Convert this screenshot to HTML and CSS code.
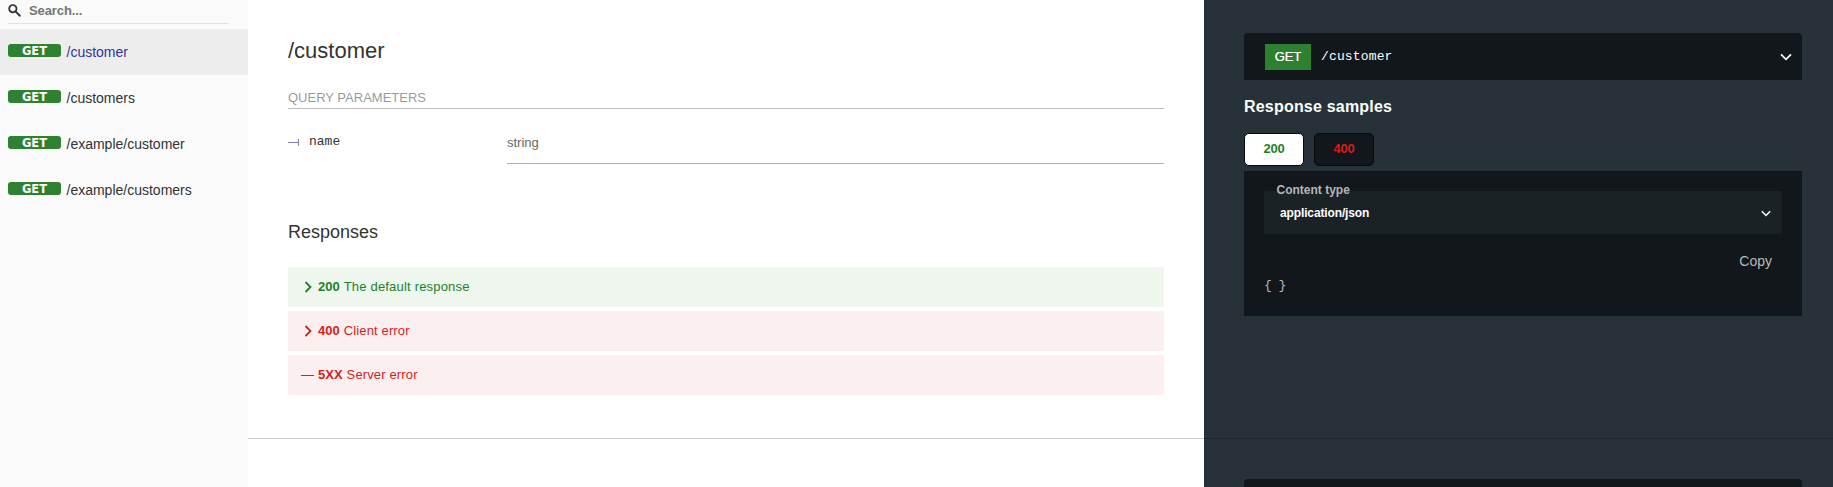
FILE: index.html
```html
<!DOCTYPE html>
<html lang="en">
<head>
<meta charset="utf-8">
<title>API reference</title>
<link rel="stylesheet" href="styles.css">
</head>
<body>
<div class="layout">
  <nav class="sidebar">
    <div class="search">
      <svg class="search-icon" viewBox="0 0 1000 1000"><path d="M968 849 667 549c84-135 68-315-49-432C482-19 262-19 126 117S-10 473 126 609c117 117 297 133 432 49l301 301c24 24 65 21 92-6l12-12c26-27 29-68 5-92zM526 509c-84 84-219 84-302 0s-83-218 0-302 218-84 302 0 83 218 0 302z"/></svg>
      <span class="search-text">Search...</span>
    </div>
    <a class="item active"><span class="badge">GET</span><span>/customer</span></a>
    <a class="item"><span class="badge">GET</span><span>/customers</span></a>
    <a class="item"><span class="badge">GET</span><span>/example/customer</span></a>
    <a class="item"><span class="badge">GET</span><span>/example/customers</span></a>
  </nav>
  <div class="operations">
    <section class="operation">
      <main class="middle">
        <h2 class="title">/customer</h2>
        <h5 class="params-title">QUERY PARAMETERS</h5>
        <div class="param">
          <div class="param-name"><span class="bullet"></span><span>name</span></div>
          <div class="param-type">string</div>
        </div>
        <h3 class="responses-title">Responses</h3>
        <div class="responses">
          <div class="response ok"><svg class="chevron" viewBox="0 0 12 12"><path d="M3.5 1 8.5 6 3.5 11"/></svg><strong>200</strong><span class="first">The default response</span></div>
          <div class="response error"><svg class="chevron" viewBox="0 0 12 12"><path d="M3.5 1 8.5 6 3.5 11"/></svg><strong>400</strong><span>Client error</span></div>
          <div class="response error"><span class="dash">—</span><strong>5XX</strong><span>Server error</span></div>
        </div>
      </main>
      <aside class="samples">
        <div class="endpoint">
          <span class="verb">GET</span><span class="path">/customer</span>
          <svg class="arrow" viewBox="0 0 12 8"><path d="M1 1.3 6 6.3 11 1.3"/></svg>
        </div>
        <h3 class="samples-title">Response samples</h3>
        <div class="tabs"><div class="tab selected">200</div><div class="tab">400</div></div>
        <div class="panel">
          <div class="dropdown">
            <span class="label">Content type</span>
            <span class="value">application/json</span>
            <svg class="arrow small" viewBox="0 0 12 8"><path d="M1 1.3 6 6.3 11 1.3"/></svg>
          </div>
          <div class="copy">Copy</div>
          <div class="json">{ }</div>
        </div>
      </aside>
    </section>
    <section class="operation next">
      <main class="middle"></main>
      <aside class="samples"><div class="endpoint"></div></aside>
    </section>
  </div>
</div>
</body>
</html>
```
FILE: styles.css
```css
* { box-sizing: border-box; }
body {
  margin: 0;
  height: 487px;
  overflow: hidden;
  background: #fff;
  color: #333;
  font-family: "Liberation Sans", Arial, sans-serif;
}
h2, h3, h5 { margin: 0; font-weight: 400; }
.layout { display: flex; height: 487px; overflow: hidden; }

.sidebar { width: 248px; flex: none; background: #fafafa; }
.search {
  display: flex;
  align-items: flex-start;
  height: 24px;
  margin: 0 20px 5px 8px;
  border-bottom: 1px solid #e1e1e1;
}
.search-icon { width: 13px; height: 13px; margin-top: 4px; fill: #333; }
.search-text { margin-left: 8px; font-size: 13px; font-weight: 700; line-height: 22px; letter-spacing: -.1px; color: #757575; }
.item {
  display: flex;
  height: 46px;
  padding: 15px 8px 0;
  gap: 5.5px;
  font-size: 14px;
  line-height: 16px;
}
.item.active { background: #ededed; color: #32329f; }
.badge {
  width: 53px;
  height: 13px;
  border-radius: 3px;
  background: #2f8132;
  color: #fff;
  font: 700 11.5px/15px "DejaVu Sans", Verdana, sans-serif;
  text-align: center;
}

.operations { flex: 1; display: flex; flex-direction: column; }
.operation { position: relative; display: flex; height: 439px; flex: none; }
.operation::after {
  content: "";
  position: absolute;
  inset: auto 0 0 0;
  border-bottom: 1px solid rgba(0, 0, 0, .2);
}
.operation.next { height: 200px; }
.middle { width: 956px; flex: none; padding: 36px 40px 0; }
.samples { flex: 1; padding: 33px 31px 0 40px; background: #263238; color: #fff; }
.next .samples { padding-top: 40px; }

.title { font-size: 22px; line-height: 30px; }
.params-title {
  height: 21px;
  margin-top: 22px;
  border-bottom: 1px solid #bfbfbf;
  font-size: 13px;
  line-height: 20px;
  color: rgba(38, 50, 56, .5);
}
.param { display: flex; height: 55px; }
.param-name {
  display: flex;
  width: 219px;
  padding-top: 23px;
  font: 13px/20px "Liberation Mono", "Courier New", monospace;
}
.bullet {
  width: 11px;
  height: 7px;
  margin: 7px 10px 0 0;
  border-right: 1px solid #7c7cbb;
  background: linear-gradient(#7c7cbb, #7c7cbb) 0 3px / 100% 1px no-repeat;
}
.param-type {
  flex: 1;
  padding-top: 24px;
  border-bottom: 1px solid #9fb4be;
  font-size: 13px;
  line-height: 20px;
  color: #666;
}
.responses-title { margin: 56px 0 23px; font-size: 18px; line-height: 24px; }
.responses { display: grid; gap: 4px; }
.response {
  display: flex;
  height: 40px;
  padding-left: 13px;
  border-radius: 2px;
  font-size: 13px;
  line-height: 39px;
  letter-spacing: .14px;
}
.response strong { margin-right: 4px; letter-spacing: 0; }
.response .first { letter-spacing: .19px; }
.response.ok { color: #1d8127; background: #eef6ee; }
.response.error { color: #d41f1c; background: #fbefef; }
.chevron { width: 12px; height: 12px; margin: 14px 4px 0 1px; fill: none; stroke: currentColor; stroke-width: 1.8; }
.dash { width: 17px; }

.endpoint {
  display: flex;
  align-items: flex-start;
  height: 47px;
  padding: 11px 10px 0 21px;
  border-radius: 4px 4px 0 0;
  background: #11171a;
}
.verb { width: 46px; height: 26px; background: #2f8132; font-size: 13px; line-height: 26px; text-align: center; text-shadow: 0 0 .3px #fff; }
.path { margin-left: 10px; font: 13px/26px "Liberation Mono", "Courier New", monospace; letter-spacing: .15px; }
.arrow { width: 12px; height: 8px; margin: 9px 0 0 auto; fill: none; stroke: #fff; stroke-width: 1.8; }
.arrow.small { width: 10px; height: 7px; margin: 19px 0 0 auto; }
.samples-title { margin-top: 15px; font-size: 16px; font-weight: 700; line-height: 24px; letter-spacing: .2px; }
.tabs { display: flex; gap: 10px; margin-top: 14px; }
.tab {
  width: 60px;
  height: 33px;
  border: 1px solid #07090b;
  border-radius: 5px;
  background: #11171a;
  color: #d41f1c;
  font-size: 13px;
  font-weight: 700;
  line-height: 30px;
  letter-spacing: -.2px;
  text-align: center;
}
.tab.selected { background: #fff; color: #1d8127; }
.panel { height: 145px; margin-top: 5px; padding: 20px; background: #11171a; }
.dropdown {
  position: relative;
  display: flex;
  height: 43px;
  padding: 0 11px 0 16px;
  border-radius: 2px;
  background: #1a2226;
  font-size: 12px;
  font-weight: 700;
  line-height: 45px;
}
.value { letter-spacing: -.13px; }
.label { position: absolute; left: 12.5px; top: -9px; line-height: 16px; color: #b5b7b8; }
.copy { margin: 19px 10px 0; font-size: 14px; line-height: 16px; color: #b8babb; text-align: right; }
.json { margin-top: 7px; font: 13px/20px "Liberation Mono", "Courier New", monospace; letter-spacing: -.6px; color: #b8babb; }
```
